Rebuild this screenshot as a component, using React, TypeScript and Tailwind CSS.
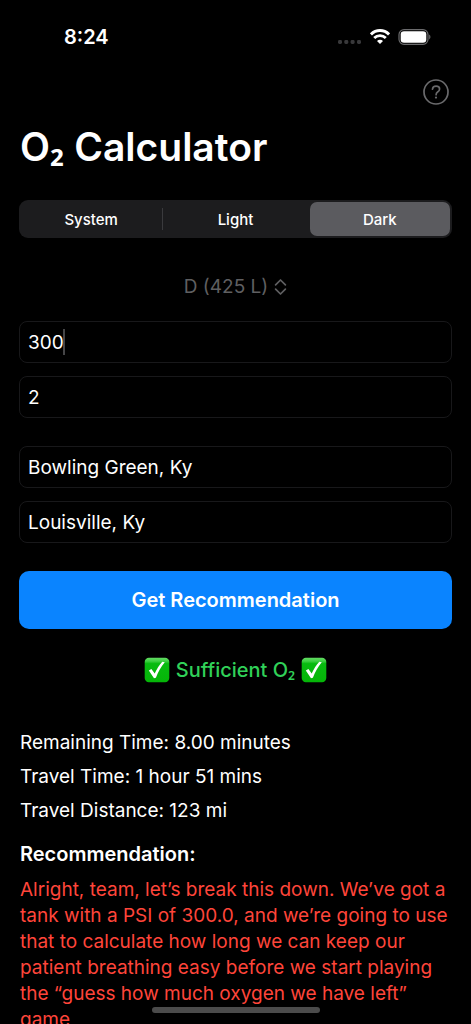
import { useState } from "react";

const themes = ["System", "Light", "Dark"];

function StatusBar() {
  return (
    <header className="flex h-[73px] shrink-0 items-center justify-between pr-10 pl-16">
      <time className="text-xl font-semibold">8:24</time>
      <div className="flex items-center gap-2">
        <svg className="mt-2.5" width="25" height="6" viewBox="0 0 25 6" fill="#38383a" aria-hidden="true">
          <rect x="1" y="1" width="4" height="4" rx="1.4" />
          <rect x="7.3" y="1" width="4" height="4" rx="1.4" />
          <rect x="13.6" y="1" width="4" height="4" rx="1.4" />
          <rect x="20" y="1" width="4" height="4" rx="1.4" />
        </svg>
        <svg width="20" height="15" viewBox="0 0 20 15" fill="none" stroke="white" aria-hidden="true">
          <path d="M0.9 5.4C6 0.2 14 0.2 19.1 5.4" strokeWidth="3" />
          <path d="M4.2 9C7.4 5.8 12.6 5.8 15.8 9" strokeWidth="2.8" />
          <path d="M10 14.9 7 11.9C8.6 10.3 11.4 10.3 13 11.9Z" fill="white" stroke="none" />
        </svg>
        <svg width="33" height="16" viewBox="0 0 33 16" aria-hidden="true">
          <rect x="1" y="0.7" width="29" height="14.6" rx="5" fill="none" stroke="#6b6b6d" strokeWidth="1.2" />
          <rect x="2.7" y="2.3" width="25.6" height="11.4" rx="3.3" fill="white" />
          <path d="M31.2 5.6C32.9 6.4 32.9 9.6 31.2 10.4Z" fill="#6b6b6d" />
        </svg>
      </div>
    </header>
  );
}

function CheckMark() {
  return (
    <svg width="26" height="26" viewBox="0 0 26 26" role="img" aria-label="Yes">
      <defs>
        <linearGradient id="tile" x1="0" y1="0" x2="0" y2="1">
          <stop offset="0" stopColor="#64dc64" />
          <stop offset="0.14" stopColor="#3fd043" />
          <stop offset="0.24" stopColor="#08bb10" />
          <stop offset="1" stopColor="#05b508" />
        </linearGradient>
      </defs>
      <rect x="0.7" y="0.7" width="24.6" height="24.6" rx="4.2" fill="url(#tile)" />
      <path d="M4.8 13.6 7.4 12 10.7 16.6C12.8 11.9 15.4 8 18.3 4.8L20.8 5.2C17 9.8 14.1 15 11.9 20.8L10 21.2Z" fill="white" />
    </svg>
  );
}

function Field({ label, initial, active = false }: { label: string; initial: string; active?: boolean }) {
  const [value, setValue] = useState(initial);
  return (
    <div className="relative">
      <input
        aria-label={label}
        value={value}
        onChange={(e) => setValue(e.target.value)}
        className="block h-[42px] w-full rounded-lg border border-[#18181a] bg-black px-2 text-[19px] outline-none"
      />
      {active && <span className="absolute top-2 left-11 h-[26px] w-0.5 bg-[#454547]" />}
    </div>
  );
}

function Oxygen() {
  return (
    <>
      O<span className="font-['Noto_Sans',sans-serif]">₂</span>
    </>
  );
}

export default function App() {
  const [theme, setTheme] = useState("Dark");
  return (
    <div className="relative flex h-dvh flex-col overflow-hidden bg-black font-['Inter',sans-serif] text-white">
      <StatusBar />
      <main className="min-h-0 flex-1 overflow-hidden px-[19px]">
        <div className="flex justify-end pt-1.5 pr-[3px]">
          <button aria-label="Help" className="text-[#6a6a6c]">
            <svg width="26" height="26" viewBox="0 0 26 26" fill="none" stroke="currentColor" strokeWidth="1.7">
              <circle cx="13" cy="13" r="12" />
              <path d="M9.5 10.2C9.6 8.2 11 7.1 13.1 7.1 15.2 7.1 16.6 8.3 16.6 10 16.6 11.5 15.8 12.2 14.6 13 13.4 13.8 13.1 14.3 13.1 15.7" strokeLinecap="round" />
              <circle cx="13" cy="18.6" r="1.1" fill="currentColor" stroke="none" />
            </svg>
          </button>
        </div>

        <h1 className="mt-4 h-[52px] px-px text-[39px] leading-[50px] font-semibold">
          <Oxygen /> Calculator
        </h1>

        <div
          role="radiogroup"
          aria-label="Appearance"
          className="mt-[27px] grid h-[38px] grid-cols-3 rounded-[9px] bg-[#1c1c1e]"
        >
          {themes.map((name) => (
            <label key={name} className="group relative flex cursor-pointer p-0.5 text-[15px] font-medium">
              <input
                type="radio"
                name="theme"
                value={name}
                checked={theme === name}
                onChange={() => setTheme(name)}
                className="absolute inset-0 appearance-none"
              />
              <span className="flex flex-1 items-center justify-center rounded-[7px] pt-0.5 group-has-checked:bg-[#5b5b5f]">
                {name}
              </span>
              {name === "System" && <span className="absolute inset-y-2 right-0 w-px bg-[#3a3a3d]" />}
            </label>
          ))}
        </div>

        <div className="mt-[33px] flex items-center justify-center gap-1.5 text-[#5f5f61]">
          <select
            aria-label="Tank size"
            className="field-sizing-content h-8 appearance-none bg-black text-[19px] outline-none"
          >
            <option>D (425 L)</option>
          </select>
          <svg width="13" height="18" viewBox="0 0 13 18" fill="none" stroke="currentColor" strokeWidth="1.7" strokeLinecap="round" strokeLinejoin="round" aria-hidden="true">
            <path d="M1.6 6.9 6.5 2 11.4 6.9M1.6 11.1 6.5 16 11.4 11.1" />
          </svg>
        </div>

        <div className="mt-[18px] flex flex-col gap-[13px]">
          <Field label="Tank pressure in PSI" initial="300" active />
          <Field label="Flow rate in liters per minute" initial="2" />
        </div>
        <div className="mt-7 flex flex-col gap-[13px]">
          <Field label="Starting point" initial="Bowling Green, Ky" />
          <Field label="Destination" initial="Louisville, Ky" />
        </div>

        <button className="mt-7 h-[58px] w-full rounded-[10px] bg-[#0a84ff] text-xl font-semibold">
          Get Recommendation
        </button>

        <p className="mt-7 flex h-[26px] items-center justify-center gap-1.5 text-xl leading-[26px] font-medium text-[#30d158]">
          <CheckMark />
          <span>
            Sufficient <Oxygen />
          </span>
          <CheckMark />
        </p>

        <section className="mt-[47px] flex flex-col gap-2 px-px text-[19px] leading-[26px]">
          <p>Remaining Time: 8.00 minutes</p>
          <p>Travel Time: 1 hour 51 mins</p>
          <p>Travel Distance: 123 mi</p>
        </section>

        <section className="mt-[17px] px-px text-[19px] leading-[26px]">
          <h2 className="text-xl leading-[26px] font-semibold">Recommendation:</h2>
          <p className="mt-2.5 text-[#ff453a]">
            Alright, team, let’s break this down. We’ve got a tank with a PSI of 300.0, and we’re going to use that to
            calculate how long we can keep our patient breathing easy before we start playing the “guess how much oxygen
            we have left” game
          </p>
        </section>
      </main>
      <div className="absolute bottom-[11px] left-1/2 h-1.5 w-[168px] -translate-x-1/2 rounded-full bg-[#4b4b4b]" />
    </div>
  );
}
